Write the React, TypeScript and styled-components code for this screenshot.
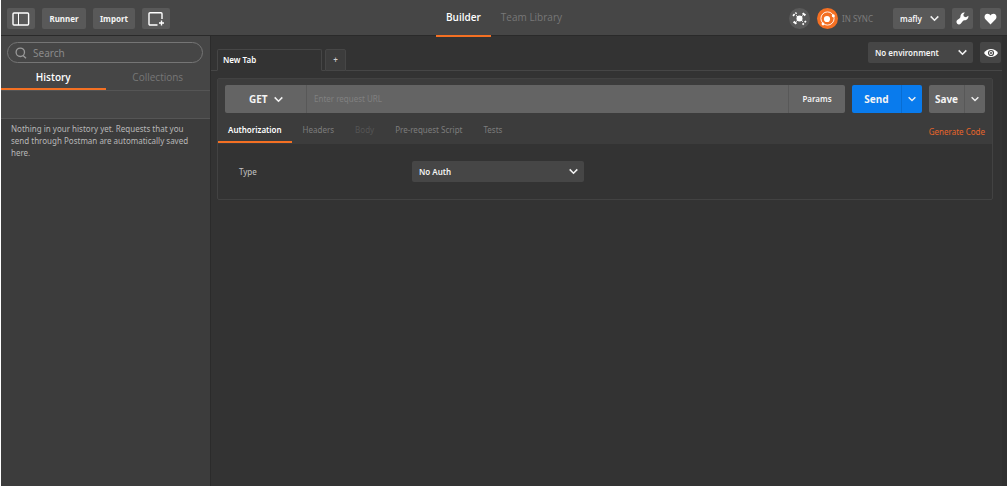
import React from 'react';
import styled, { createGlobalStyle, css } from 'styled-components';

const GlobalStyle = createGlobalStyle`
  *, *::before, *::after { box-sizing: border-box; }
  body {
    margin: 0;
    background: #fff;
    font-family: 'Noto Sans', 'Open Sans', sans-serif;
    font-size: 8px;
    line-height: 12px;
    color: #f4f4f4;
  }
  button, input, select { font: inherit; color: inherit; margin: 0; }
  button { cursor: pointer; }
`;

const Page = styled.div`
  display: flex;
  flex-direction: column;
  min-height: 100vh;
  margin: 0 1px;
  background: #333;
`;

const Header = styled.header`
  display: grid;
  grid-template-columns: 1fr auto 1fr;
  height: 36px;
  padding: 0 6px;
  background: #464646;
  border-bottom: 1px solid #2a2a2a;
`;

const Group = styled.div<{ $end?: boolean }>`
  display: flex;
  align-items: center;
  gap: 7px;
  ${p => p.$end && 'justify-content: flex-end;'}
`;

const Button = styled.button<{ $width: number; $tone?: string }>`
  display: flex;
  align-items: center;
  justify-content: center;
  width: ${p => p.$width}px;
  height: 21px;
  padding: 0;
  border: 0;
  border-radius: 2px;
  background: ${p => p.$tone ?? '#595959'};
  font-weight: 700;
`;

const MainNav = styled.nav`
  display: flex;
`;

const NavLink = styled.a<{ $active?: boolean }>`
  padding: 0 10px;
  border-bottom: 2px solid ${p => (p.$active ? '#f47023' : 'transparent')};
  color: ${p => (p.$active ? '#fff' : '#777')};
  font-family: 'Open Sans', 'Noto Sans', sans-serif;
  font-size: 10px;
  font-weight: ${p => (p.$active ? 600 : 400)};
  line-height: 35px;
  text-decoration: none;
`;

const RoundButton = styled.button<{ $active?: boolean }>`
  display: flex;
  width: 21px;
  height: 21px;
  padding: 0;
  border: 0;
  border-radius: 50%;
  background: ${p => (p.$active ? '#f47023' : '#595959')};
`;

const SyncState = styled.span`
  margin: 0 13px 0 -3px;
  color: #7c7c7c;
`;

const Body = styled.div`
  display: flex;
  flex: 1;
`;

const Sidebar = styled.aside`
  flex: 0 0 209px;
  background: #3c3c3c;
`;

const SidebarTop = styled.div`
  padding-top: 6px;
  background: #464646;
  border-bottom: 1px solid #555;
`;

const SearchBox = styled.label`
  display: flex;
  align-items: center;
  gap: 6px;
  height: 21px;
  margin: 0 7px 0 6px;
  padding: 0 7px;
  border: 1px solid #757575;
  border-radius: 11px;
`;

const TextInput = styled.input<{ $size: number; $hint: string }>`
  flex: 1;
  min-width: 0;
  padding: 0;
  border: 0;
  outline: 0;
  background: transparent;
  font-size: ${p => p.$size}px;
  &::placeholder { color: ${p => p.$hint}; opacity: 1; }
`;

const SideTabs = styled.div`
  display: grid;
  grid-template-columns: 1fr 1fr;
  height: 28px;
  border-bottom: 1px solid #555;
`;

const SideTab = styled.button<{ $active?: boolean }>`
  padding: 2px 0 0;
  border: 0;
  border-bottom: 2px solid ${p => (p.$active ? '#f47023' : 'transparent')};
  background: none;
  color: ${p => (p.$active ? '#fff' : '#777')};
  font-family: 'Open Sans', 'Noto Sans', sans-serif;
  font-size: 10px;
  font-weight: ${p => (p.$active ? 600 : 400)};
`;

const SideToolbar = styled.div`
  height: 27px;
`;

const EmptyNote = styled.p`
  margin: 0;
  padding: 4px 10px;
  color: #b8b8b8;
`;

const Main = styled.main`
  flex: 1;
  min-width: 0;
  border-left: 1px solid #2b2b2b;
  border-right: 5px solid #303030;
`;

const TabBar = styled.div`
  display: flex;
  align-items: flex-end;
  height: 35px;
`;

const TabRule = styled.div<{ $width?: number }>`
  ${p => (p.$width ? css`flex: 0 0 ${p.$width}px;` : css`flex: 1;`)}
  align-self: stretch;
  display: flex;
  align-items: flex-start;
  justify-content: flex-end;
  gap: 7px;
  padding: 6px 1px 0 0;
  border-bottom: 1px solid #464646;
`;

const RequestTab = styled.button<{ $active?: boolean }>`
  width: ${p => (p.$active ? 105 : 21)}px;
  height: 22px;
  padding: ${p => (p.$active ? '0 5px' : '0')};
  border: 1px solid #464646;
  border-bottom-color: ${p => (p.$active ? '#333' : '#464646')};
  border-radius: 2px 2px 0 0;
  background: ${p => (p.$active ? '#333' : '#3c3c3c')};
  color: ${p => (p.$active ? '#fff' : '#ccc')};
  text-align: ${p => (p.$active ? 'left' : 'center')};
  font-weight: 600;
`;

const SelectWrap = styled.div<{ $width: number; $tone: string; $height?: number }>`
  position: relative;
  flex: none;
  width: ${p => p.$width}px;
  height: ${p => p.$height ?? 21}px;
  border-radius: 2px;
  background: ${p => p.$tone};
`;

const Select = styled.select<{ $inset?: number; $strong?: boolean }>`
  appearance: none;
  width: 100%;
  height: 100%;
  padding: 0 ${p => p.$inset ?? 7}px;
  border: 0;
  outline: 0;
  background: transparent;
  font-size: ${p => (p.$strong ? 10 : 8)}px;
  font-weight: ${p => (p.$strong ? 700 : 600)};
  option { background: #464646; }
`;

const SelectArrow = styled.span<{ $right?: number }>`
  position: absolute;
  top: 0;
  right: ${p => p.$right ?? 6}px;
  bottom: 0;
  display: flex;
  align-items: center;
  pointer-events: none;
`;

const Panel = styled.section`
  margin: 7px 9px 0 6px;
  border: 1px solid #424242;
  border-radius: 2px;
`;

const PanelHead = styled.div`
  background: #3c3c3c;
`;

const RequestRow = styled.form`
  display: flex;
  gap: 7px;
  padding: 6px 7px 0;
`;

const UrlBar = styled.div`
  display: flex;
  flex: 1;
  min-width: 0;
  height: 28px;
  border-radius: 2px;
  background: #646464;
  overflow: hidden;
`;

const UrlField = styled.div`
  display: flex;
  flex: 1;
  min-width: 0;
  padding: 0 7px;
  border: solid #585858;
  border-width: 0 1px;
`;

const ParamsButton = styled.button`
  width: 56px;
  padding: 0;
  border: 0;
  background: none;
  font-weight: 600;
`;

const SplitButton = styled.div<{ $tone: string; $line: string }>`
  display: flex;
  height: 28px;
  border-radius: 2px;
  background: ${p => p.$tone};
  button + button { border-left: 1px solid ${p => p.$line}; }
`;

const SplitPart = styled.button<{ $width: number }>`
  display: flex;
  align-items: center;
  justify-content: center;
  width: ${p => p.$width}px;
  padding: 0;
  border: 0;
  background: none;
  font-size: 10px;
  font-weight: 700;
`;

const OptionRow = styled.div`
  display: flex;
  align-items: center;
  justify-content: space-between;
  height: 31px;
  padding-right: 7px;
`;

const OptionTabs = styled.div`
  display: flex;
  gap: 1px;
`;

const OptionTab = styled.button<{ $active?: boolean }>`
  height: 29px;
  padding: 5px 10px 0;
  border: 0;
  border-bottom: 2px solid ${p => (p.$active ? '#f47023' : 'transparent')};
  background: none;
  color: ${p => (p.$active ? '#fff' : '#7c7c7c')};
  font-weight: ${p => (p.$active ? 600 : 400)};
  &:disabled { color: #555; }
`;

const CodeLink = styled.a`
  padding-top: 6px;
  color: #e8652a;
  text-decoration: none;
`;

const AuthRow = styled.div`
  display: flex;
  align-items: center;
  height: 55px;
  padding-left: 21px;
`;

const FieldLabel = styled.label`
  width: 173px;
  color: #c4c4c4;
`;

const Chevron = ({ size = 9 }: { size?: number }) => (
  <svg width={size} height={size} viewBox="0 0 9 9" fill="none" stroke="#f0f0f0" strokeWidth="1.6" aria-hidden="true">
    <path d="M0.7 2.4 4.5 6.2 8.3 2.4" />
  </svg>
);

const SidebarIcon = () => (
  <svg width="18" height="14" viewBox="0 0 18 14" fill="none" stroke="#fff" aria-hidden="true">
    <rect x="1" y="1" width="15.6" height="12" rx="1" strokeWidth="1.4" />
    <path d="M6.500 1v12" />
  </svg>
);

const NewWindowIcon = () => (
  <svg width="18" height="16" viewBox="0 0 18 16" fill="none" stroke="#fff" strokeWidth="1.4" aria-hidden="true">
    <path d="M10.500 14H3a1 1 0 0 1-1-1V2.700a1 1 0 0 1 1-1h11a1 1 0 0 1 1 1V8M14.500 9.500v5M12 12h5" />
  </svg>
);

const SearchIcon = () => (
  <svg width="12" height="12" viewBox="0 0 12 12" fill="none" stroke="#999" strokeWidth="1.3" aria-hidden="true">
    <circle cx="5.3" cy="5.3" r="4.2" />
    <path d="M8 8.5l3 2.8" />
  </svg>
);

const SatelliteIcon = () => (
  <svg width="21" height="21" viewBox="0 0 21 21" stroke="#fff" fill="none" aria-hidden="true">
    <circle cx="10.500" cy="10.500" r="3" fill="#fff" stroke="none" />
    <path d="M7 7.300l7 6.400M13.800 7.500l-6.600 6" strokeWidth="1" />
    <path d="M13.600 5.200l2.800 2.200M4.600 13.600l2.800 2.200" strokeWidth="2" />
    <path d="M4 7.800l1.600-1.600M6.500 5.600l1-1M13.600 16.600l1.200-1.200M15.600 14.400l1.400-1.400" strokeWidth="1.700" />
  </svg>
);

const OrbitIcon = () => (
  <svg width="21" height="21" viewBox="0 0 21 21" fill="#fff" aria-hidden="true">
    <circle cx="10.500" cy="10.500" r="6.600" fill="none" stroke="#fff" strokeWidth="0.900" />
    <circle cx="10" cy="11" r="3.100" />
    <circle cx="16.300" cy="7.800" r="1.500" />
    <circle cx="6" cy="16" r="1.400" />
  </svg>
);

const WrenchIcon = () => (
  <svg width="13" height="13" viewBox="0 0 13 13" fill="#fff" aria-hidden="true">
    <path d="M8.800.6 7.300 2.700l.6 1.900 2 .7 2.500-1.500c.3 2.600-1.500 4.500-4 4.500-.7 0-1.100.2-1.500.7l-2 2.500c-.9 1.100-2.700 1.200-3.700.2S.2 9 1.300 8.100l2.400-1.900c.5-.4.7-.9.7-1.500C4.400 2.200 6.300.3 8.800.6z" />
  </svg>
);

const HeartIcon = () => (
  <svg width="13" height="12" viewBox="0 0 13 12" fill="#fff" aria-hidden="true">
    <path d="M6.500 11.500 1.400 6.300C-.2 4.500.4.800 3.500.8c1.500 0 2.400.8 3 1.700.6-.9 1.500-1.700 3-1.700 3.100 0 3.700 3.700 2.100 5.500z" />
  </svg>
);

const EyeIcon = () => (
  <svg width="14" height="10" viewBox="0 0 14 10" aria-hidden="true">
    <path d="M0 5C3.200-.3 10.800-.3 14 5 10.800 10.300 3.200 10.300 0 5z" fill="#fff" />
    <circle cx="7" cy="5" r="2.500" fill="#fff" stroke="#464646" strokeWidth="1.200" />
    <circle cx="7" cy="5" r="1" fill="#464646" />
  </svg>
);

export default function App() {
  return (
    <>
      <GlobalStyle />
      <Page>
        <Header>
          <Group>
            <Button $width={28} aria-label="Toggle sidebar"><SidebarIcon /></Button>
            <Button $width={44}>Runner</Button>
            <Button $width={42}>Import</Button>
            <Button $width={28} aria-label="New window"><NewWindowIcon /></Button>
          </Group>
          <MainNav>
            <NavLink href="#builder" $active>Builder</NavLink>
            <NavLink href="#library">Team Library</NavLink>
          </MainNav>
          <Group $end>
            <RoundButton aria-label="Interceptor"><SatelliteIcon /></RoundButton>
            <RoundButton $active aria-label="Sync"><OrbitIcon /></RoundButton>
            <SyncState>IN SYNC</SyncState>
            <SelectWrap $width={52} $tone="#595959">
              <Select aria-label="Account"><option>mafly</option></Select>
              <SelectArrow><Chevron /></SelectArrow>
            </SelectWrap>
            <Button $width={21} aria-label="Settings"><WrenchIcon /></Button>
            <Button $width={21} aria-label="Favourites"><HeartIcon /></Button>
          </Group>
        </Header>
        <Body>
          <Sidebar>
            <SidebarTop>
              <SearchBox>
                <SearchIcon />
                <TextInput $size={10} $hint="#8a8a8a" placeholder="Search" aria-label="Search" />
              </SearchBox>
              <SideTabs>
                <SideTab $active>History</SideTab>
                <SideTab>Collections</SideTab>
              </SideTabs>
              <SideToolbar />
            </SidebarTop>
            <EmptyNote>
              Nothing in your history yet. Requests that you send through Postman are automatically saved here.
            </EmptyNote>
          </Sidebar>
          <Main>
            <TabBar>
              <TabRule $width={6} />
              <RequestTab $active>New Tab</RequestTab>
              <TabRule $width={3} />
              <RequestTab aria-label="Add tab">+</RequestTab>
              <TabRule>
                <SelectWrap $width={105} $tone="#464646">
                  <Select aria-label="Environment"><option>No environment</option></Select>
                  <SelectArrow><Chevron /></SelectArrow>
                </SelectWrap>
                <Button $width={21} $tone="#464646" aria-label="Environment quick look"><EyeIcon /></Button>
              </TabRule>
            </TabBar>
            <Panel>
              <PanelHead>
                <RequestRow onSubmit={e => e.preventDefault()}>
                  <UrlBar>
                    <SelectWrap $width={81} $height={28} $tone="transparent">
                      <Select $inset={24} $strong aria-label="Method"><option>GET</option></Select>
                      <SelectArrow $right={23}><Chevron /></SelectArrow>
                    </SelectWrap>
                    <UrlField>
                      <TextInput $size={8} $hint="#808080" placeholder="Enter request URL" aria-label="Request URL" />
                    </UrlField>
                    <ParamsButton type="button">Params</ParamsButton>
                  </UrlBar>
                  <SplitButton $tone="#097bed" $line="#086dd2">
                    <SplitPart $width={49} type="submit">Send</SplitPart>
                    <SplitPart $width={21} type="button" aria-label="Send options"><Chevron size={8} /></SplitPart>
                  </SplitButton>
                  <SplitButton $tone="#646464" $line="#585858">
                    <SplitPart $width={35} type="button">Save</SplitPart>
                    <SplitPart $width={21} type="button" aria-label="Save options"><Chevron size={8} /></SplitPart>
                  </SplitButton>
                </RequestRow>
                <OptionRow>
                  <OptionTabs>
                    <OptionTab $active>Authorization</OptionTab>
                    <OptionTab>Headers</OptionTab>
                    <OptionTab disabled>Body</OptionTab>
                    <OptionTab>Pre-request Script</OptionTab>
                    <OptionTab>Tests</OptionTab>
                  </OptionTabs>
                  <CodeLink href="#code">Generate Code</CodeLink>
                </OptionRow>
              </PanelHead>
              <AuthRow>
                <FieldLabel htmlFor="auth-type">Type</FieldLabel>
                <SelectWrap $width={172} $tone="#464646">
                  <Select id="auth-type"><option>No Auth</option></Select>
                  <SelectArrow><Chevron /></SelectArrow>
                </SelectWrap>
              </AuthRow>
            </Panel>
          </Main>
        </Body>
      </Page>
    </>
  );
}
